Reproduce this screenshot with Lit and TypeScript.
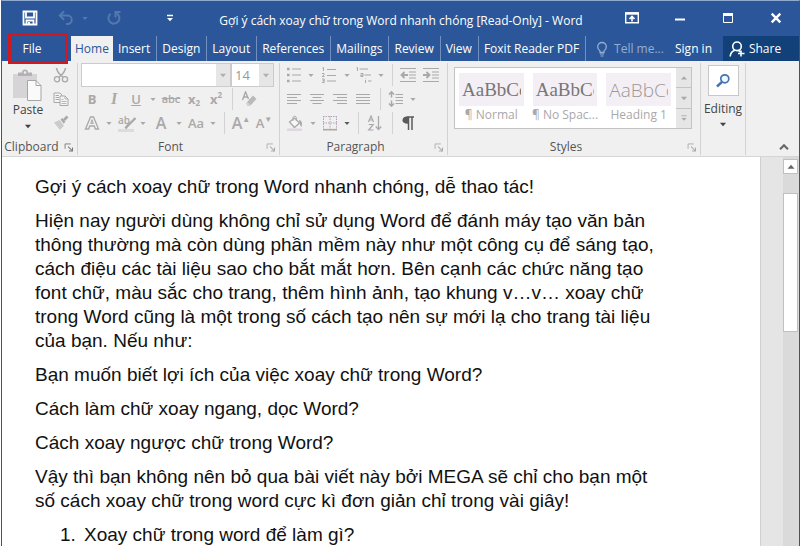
import { LitElement, html, svg, css, nothing } from "lit";
import { customElement, property } from "lit/decorators.js";

const glyphs: Record<string, any> = {
  save: svg`<path d="M1.500 1.500h13v13h-13z M4 2v5.500h8V2 M4.500 14.500v-4h7v4" fill="none" stroke="currentColor" stroke-width="1.800"/><path d="M6 12h2v3H6z" fill="currentColor"/>`,
  undo: svg`<path d="M2 5.500h7.500a4 4 0 0 1 0 8.500H8" fill="none" stroke="currentColor" stroke-width="2"/><path d="M6 1.200 1.800 5.500 6 9.800" fill="none" stroke="currentColor" stroke-width="2"/>`,
  redo: svg`<path d="M10.500 3.300A5.500 5.500 0 1 1 4.500 3.800" fill="none" stroke="currentColor" stroke-width="2"/><path d="M14.500 2H9.500v5.500" fill="none" stroke="currentColor" stroke-width="2"/>`,
  customize: svg`<path d="M5 5.500h6" stroke="currentColor" stroke-width="1.500"/><path d="M5 8h6l-3 3.200z" fill="currentColor"/>`,
  ribbon: svg`<path d="M1.700 3h12.600v9.800H1.700z" fill="none" stroke="currentColor" stroke-width="1.400"/><path d="M1 2.300h14v2.400H1z" fill="currentColor"/><path d="M8 11.500V7M5.500 9 8 6.500 10.500 9" fill="none" stroke="currentColor" stroke-width="1.600"/>`,
  min: svg`<path d="M3 9.500h10" stroke="currentColor" stroke-width="2"/>`,
  max: svg`<path d="M3.500 3.500h9v9h-9z" fill="none" stroke="currentColor"/><path d="M3 3h10v3H3z" fill="currentColor"/>`,
  close: svg`<path d="M3.700 3.700l8.600 8.600M12.300 3.700l-8.600 8.600" stroke="currentColor" stroke-width="2.400"/>`,
  bulb: svg`<path d="M6 11.500V10C4.600 9 3.700 7.700 3.700 5.800a4.300 4.300 0 0 1 8.600 0C12.300 7.700 11.400 9 10 10v1.500z" fill="none" stroke="currentColor" stroke-width="1.300"/><path d="M6 13h4M6.500 15h3" stroke="currentColor" stroke-width="1.200"/>`,
  share: svg`<circle cx="8" cy="5.300" r="4.300" fill="none" stroke="currentColor" stroke-width="1.600"/><path d="M1.200 15.500c.3-3.500 2-5.500 4.600-6.300M9.500 9.500l1.700 1.400M12 9.500v6M9 12.500h6.500" fill="none" stroke="currentColor" stroke-width="1.600"/>`,
  caret: svg`<path d="M4.500 6.500h7l-3.500 4z" fill="currentColor"/>`,
  up: svg`<path d="M4 10h8l-4-4.500z" fill="currentColor"/>`,
  more: svg`<path d="M5 5.500h6" stroke="currentColor"/><path d="M5 8h6l-3 3z" fill="currentColor"/>`,
  launch: svg`<path d="M3.500 10V4.500H10" fill="none" stroke="currentColor"/><path d="M7 7.500l4.500 4.500M12 8.500V12.500H8" fill="none" stroke="currentColor" stroke-width="1.200"/>`,
  paste: svg`<path d="M1 5h24v24H1z" fill="#d6d4d6"/><path d="M6 7V3.500h4C10 1.500 11 .5 13 .5s3 1 3 3h4V7z" fill="#b3b1b3"/><circle cx="13" cy="3.500" r="1.300" fill="#f0f0f0"/><path d="M15.500 11.500h8.500l5 5v15H15.500z" fill="#fafafa" stroke="#a6a6a6"/><path d="M24 11.500v5h5" fill="none" stroke="#a6a6a6"/>`,
  cut: svg`<path d="M3.500 1c.3 3 2 5.500 6.300 9M12.500 1c-.3 3-2 5.500-6.300 9" fill="none" stroke="currentColor" stroke-width="1.600"/><circle cx="4" cy="12.300" r="2.600" fill="none" stroke="currentColor" stroke-width="1.300"/><circle cx="12" cy="12.300" r="2.600" fill="none" stroke="currentColor" stroke-width="1.300"/>`,
  copy: svg`<path d="M1 2h6l2 2v7.500H1z" fill="#f5f5f5" stroke="currentColor"/><path d="M2.500 4.500H6M2.500 6.500H6M2.500 8.500H6" stroke="currentColor"/><path d="M7 5h5l3 3v6.500H7z" fill="#f5f5f5" stroke="currentColor"/><path d="M12 5v3h3M8.500 8.500h2M8.500 10.500h5M8.500 12.500h5" fill="none" stroke="currentColor" stroke-width=".8"/>`,
  painter: svg`<path d="M1 7.500 6.500 5l4.500 5.500-4 4.500z" fill="#cccacb"/><path d="M7.500 4.500 9.500 3 12.500 7l-2 1.500z" fill="currentColor"/><path d="M11 5l3.500-3.500" stroke="currentColor" stroke-width="2.600"/>`,
  eraser: svg`<path d="M1.500 9 4.500 1 7.500 8M2.500 6h4" fill="none" stroke="currentColor" stroke-width="1.400"/><path d="M6 11l6-6.500 3.500 3.500-6 6.500z" fill="#bbb9ba"/><path d="M5 12l1-1 3.500 3.500-1 .5H6.500z" fill="#cfcfcf"/>`,
  outlineA: svg`<path d="M1.500 14 6.500 2h3l5 12h-3.200l-1-3H5.700l-1 3z" fill="none" stroke="currentColor" stroke-width="1.300"/><path d="M6.700 8.500 8 4.700l1.300 3.800z" fill="none" stroke="currentColor"/>`,
  pen: svg`<path d="M6 10.500 14.500 2 M7 9l-2.500 3.500" stroke="currentColor" stroke-width="2.400"/>`,
  bullets: svg`<path d="M1 2h2.600M1 8h2.600M1 14h2.600" stroke="currentColor" stroke-width="2.600"/><path d="M6 2h9M6 8h9M6 14h9" stroke="currentColor" stroke-width="1.200"/>`,
  numbers: svg`<path d="M1.500 1 2.500 .5V4M1 6.500h2v1.300L1.300 9.500H3.500M1 12h2.200v3.500H1M1.500 13.700H3" fill="none" stroke="currentColor"/><path d="M6 2.500h9M6 8.500h9M6 14h9" stroke="currentColor" stroke-width="1.200"/>`,
  multilevel: svg`<path d="M.5 1 1.500.5V4M4.500 6.500h2.500V9.500H4.800V8H7M9.500 11.500v.5M9.500 13v3" fill="none" stroke="currentColor"/><path d="M3.500 2H12M8.500 8H15M12 14h3.500" stroke="currentColor" stroke-width="1.200"/>`,
  outdent: svg`<path d="M0 1.500h16M9 5h7M9 8h7M9 11h7M0 14.500h16" stroke="currentColor" stroke-width="1.100"/><path d="M8 8H1.500M4.500 5 1.500 8l3 3" fill="none" stroke="currentColor" stroke-width="1.800"/>`,
  indent: svg`<path d="M0 1.500h16M9 5h7M9 8h7M9 11h7M0 14.500h16" stroke="currentColor" stroke-width="1.100"/><path d="M0 8h6.500M3.500 5l3 3-3 3" fill="none" stroke="currentColor" stroke-width="1.800"/>`,
  left: svg`<path d="M1 3.500h14M1 6.500h10M1 9.500h14M1 12.500h10" stroke="currentColor" stroke-width="1.100"/>`,
  center: svg`<path d="M1 3.500h14M3.500 6.500h9M1 9.500h14M3.500 12.500h9" stroke="currentColor" stroke-width="1.100"/>`,
  right: svg`<path d="M1 3.500h14M5 6.500h10M1 9.500h14M5 12.500h10" stroke="currentColor" stroke-width="1.100"/>`,
  justify: svg`<path d="M1 3.500h14M1 6.500h14M1 9.500h14M1 12.500h14" stroke="currentColor" stroke-width="1.100"/>`,
  spacing: svg`<path d="M3.500 1v5.500M3.500 9.500V15M1 3.500l2.500-2.700L6 3.500M1 12.500l2.500 2.700L6 12.500" fill="none" stroke="currentColor" stroke-width="1.500"/><path d="M7.500 3.500H15M7.500 6.500H15M7.500 9.500H15M7.500 12.500H15" stroke="currentColor" stroke-width="1.100"/>`,
  bucket: svg`<path d="M2.500 7 7.500 3l5 5-5 4.500z" fill="#f7f7f7" stroke="currentColor" stroke-width="1.300"/><path d="M6 6V2.500a1.700 1.700 0 0 1 3.300 0V6" fill="none" stroke="currentColor"/><path d="M12 5c3 .5 3.500 3 2.500 7-1.500-1-1.500-3-2-4z" fill="currentColor"/><path d="M0 13.500h15V16H0z" fill="#dfd9df"/>`,
  borders: svg`<path d="M1.500 1v14M8 1v14M14.500 1v14M1 1.500h14M1 8h14" fill="none" stroke="#b5a2b5" stroke-dasharray="1.500 1"/><path d="M1 14.700h14" stroke="currentColor" stroke-width="1.600"/>`,
  sort: svg`<path d="M1.500 7 4 1l2.500 6M2.300 5h3.500M1.700 9.500h4.500L1.700 15h4.800" fill="none" stroke="currentColor" stroke-width="1.200"/><path d="M11.500 1v13M8.800 11.500l2.700 3 2.700-3" fill="none" stroke="currentColor" stroke-width="1.300"/>`,
  pilcrow: svg`<path d="M7.500 2H14M8.500 2v13M12 2v13" stroke="currentColor" stroke-width="1.500"/><path d="M8.500 1.300v7.500C4.500 9 2.500 7.500 2.500 5.200S4.500 1.300 8.500 1.300z" fill="currentColor"/>`,
  find: svg`<circle cx="9.800" cy="5.800" r="4" fill="#f4f8fc" stroke="currentColor" stroke-width="1.700"/><path d="M7 8.800 2 13.500" stroke="currentColor" stroke-width="2.500"/>`,
  collapse: svg`<path d="M3.500 10.500 8 6l4.500 4.500" fill="none" stroke="currentColor" stroke-width="2.400"/>`,
};

const icon = (name: string, size = 16, box = 16) =>
  html`<svg class="icon" width=${size} height=${size} viewBox="0 0 ${box} ${box}" aria-hidden="true">${glyphs[name]}</svg>`;

const tool = (label: string, content: unknown, size = "m", extra = "") =>
  html`<button class="tool ${size} ${extra}" aria-label=${label} title=${label}>${content}</button>`;
const drop = (label: string, extra = "") => tool(label, icon("caret", 12), "s", extra);
const bar = () => html`<span class="bar"></span>`;

const controls = css`
  * { box-sizing: border-box; }
  button, select, input { font: inherit; color: inherit; background: none; border: 0; border-radius: 0; padding: 0; margin: 0; }
  button { display: flex; align-items: center; justify-content: center; white-space: nowrap; }
  .icon { display: block; flex: none; }
`;

@customElement("ribbon-group")
class RibbonGroup extends LitElement {
  @property() label = "";
  @property({ type: Boolean }) launcher = false;
  static styles = [controls, css`
    :host { display: flex; flex-direction: column; height: 92px; border-right: 1px solid #d2d2d2; }
    .content { flex: 1; min-height: 0; }
    .foot { display: flex; align-items: center; height: 16px; color: #555; }
    .name { flex: 1; text-align: center; }
    .launch { width: 16px; height: 16px; color: var(--launch, #aaa); }
  `];
  render() {
    return html`<div class="content"><slot></slot></div>
      <div class="foot"><span class="name">${this.label}</span>
      ${this.launcher ? html`<button class="launch" aria-label="${this.label} settings">${icon("launch", 14)}</button>` : nothing}</div>`;
  }
}

@customElement("app-root")
class AppRoot extends LitElement {
  static styles = [controls, css`
    :host { display: block; background: #fff; padding: 0 0 2px 1px; font: 12px/16px "Open Sans", "Noto Sans", sans-serif; }
    .window { display: flex; flex-direction: column; min-height: calc(100vh - 2px); border: 1px solid #2b579a; border-top-color: #8fa9cf; border-bottom: 0; }
    .titlebar { display: flex; align-items: center; height: 35px; background: #2b579a; color: #fff; padding: 0 15px 0 20px; }
    .quick { display: flex; align-items: center; margin-top: -2px; }
    .quick button { height: 24px; }
    .faded { color: #5478b0; }
    .save { width: 16px; }
    .undo { width: 16px; margin-left: 20px; }
    .undo-more { width: 14px; margin-left: 4px; }
    .redo { width: 16px; margin-left: 14px; }
    .customize { width: 16px; margin-left: 40px; }
    .title { flex: 1; margin: 4px 0 0; font: 12px/16px "Open Sans", "Noto Sans", sans-serif; text-align: center; white-space: nowrap; }
    .system { display: flex; gap: 32px; margin-top: -2px; }
    .tabs { display: flex; align-items: center; height: 25px; background: #2b579a; color: #fff; }
    .tabs button { height: 25px; }
    .tabs .file { width: 60px; height: 31px; margin: 0 3px 0 6px; padding-right: 12px; border: 3px solid #d01820; position: relative; }
    .tabs .tab { padding: 0 6px 0 5px; border-right: 1px solid #7290bf; }
    .tabs .active { background: #f0f0f0; color: #2b579a; border: 0; padding: 0 4px; }
    .tell { display: flex; align-items: center; gap: 4px; flex: 1; padding-left: 8px; color: #95add2; min-width: 0; }
    .tell input { width: 52px; min-width: 0; flex: 1; outline: 0; }
    .tell input::placeholder { color: #95add2; opacity: 1; }
    .signin { margin: 0 11px 0 8px; }
    .tabs .share { width: 76px; gap: 4px; background: #124079; padding-right: 12px; }
    .ribbon { display: flex; height: 96px; padding-top: 2px; background: #f0f0f0; color: #aaa8a9; border-bottom: 1px solid #d5d5d5; }
    .clipboard { width: 76px; --launch: #777; }
    .font { width: 202px; }
    .paragraph { width: 168px; }
    .styles { flex: 1; min-width: 0; }
    .editing { width: 45px; }
    .clip { display: flex; justify-content: space-between; padding: 0 8px 0 10px; }
    .paste { flex-direction: column; color: #444; padding-top: 6px; gap: 1px; justify-content: flex-start; }
    .clip-tools { display: flex; flex-direction: column; gap: 8px; padding-top: 4px; }
    .rows { display: flex; flex-direction: column; padding-left: 3px; }
    .row { display: flex; align-items: center; height: 24px; }
    .tool { height: 22px; font-weight: 600; font-size: 13px; }
    .s { width: 12px; } .m { width: 22px; } .l { width: 24px; }
    .bold { font-weight: 700; }
    .italic { font-family: "Liberation Serif", serif; font-style: italic; font-size: 16px; }
    .under { text-decoration: underline; }
    .strike { text-decoration: line-through; font-size: 11px; }
    .big { font-size: 16px; }
    .index { font-weight: 700; }
    .tiny { font-size: 8px; line-height: 8px; }
    .subscript { padding-top: 8px; }
    .superscript { padding-bottom: 8px; }
    .highlight { position: relative; font-size: 10px; }
    .highlight svg { position: absolute; left: 6px; top: 4px; }
    .highlight span { border-bottom: 3px solid #dedbde; padding: 0 4px 3px 0; line-height: 12px; }
    .dark { color: #5b5b5b; }
    .bar { width: 10px; height: 22px; background: linear-gradient(#d2d2d2, #d2d2d2) center / 1px 100% no-repeat; }
    .combo { display: flex; align-items: center; height: 24px; background: #fff; border: 1px solid #cbcbcb; color: #999; position: relative; }
    .combo select { appearance: none; width: 100%; height: 22px; padding: 0 16px 0 3px; font-size: 13px; outline: 0; }
    .combo span { position: absolute; right: 0; top: 0; display: flex; align-items: center; width: 14px; height: 22px; background: #e6e6e6; pointer-events: none; color: #b0b0b0; }
    .face { width: 150px; } .size { width: 43px; }
    .gallery { display: flex; height: 62px; margin: 4px 8px 0 6px; border: 1px solid #c3c3c3; background: #fff; overflow: hidden; }
    .cards { display: flex; flex: 1; gap: 9px; padding: 5px 5px 0 4px; min-width: 0; }
    .card { flex: 1 1 0; min-width: 0; flex-direction: column; justify-content: flex-start; gap: 1px; }
    .sample { display: block; width: 100%; height: 33px; line-height: 34px; background: #f4eff5; padding-left: 3px; border-right: 3px solid #f4eff5; overflow: hidden; text-align: left; font-family: "Liberation Serif", serif; font-size: 19px; color: #777; }
    .heading { font-family: "Open Sans", sans-serif; font-weight: 300; color: #999; }
    .scrolls { width: 15px; display: grid; grid-template-rows: repeat(3, 1fr); gap: 1px; background: #c3c3c3; }
    .scrolls button { background: #e6e6e6; width: 15px; }
    .edit { width: 44px; flex-direction: column; color: #444; padding-top: 2px; }
    .find { display: flex; align-items: center; justify-content: center; width: 31px; height: 31px; background: #fff; border: 1px solid #c8c8c8; color: #4474b0; margin-bottom: 5px; }
    .end { width: 53px; display: flex; align-items: flex-end; justify-content: flex-end; padding: 0 8px 2px 0; color: #666; }
    .workspace { display: flex; flex: 1; background: #e5e5e5; }
    .page { flex: 1; background: #fff; border-right: 1px solid #cfcfcf; padding: 18px 100px 0 33px; color: #111; font: 19px/24px "Liberation Sans", Arial, sans-serif; }
    .page p { margin: 0 0 10px; }
    .page ol { margin: 0; padding-left: 46px; }
    .page li { padding-left: 3px; height: 20px; }
    .gutter { width: 22px; }
    .scrollbar { width: 16px; background: #dadada; padding: 2px 1px 0 0; }
    .scrollbar button { width: 15px; background: #fff; border: 1px solid #c0c0c0; color: #666; }
    .arrow { height: 15px; margin-bottom: 19px; }
    .thumb { height: 139px; }
  `];

  tabs = ["Insert", "Design", "Layout", "References", "Mailings", "Review", "View", "Foxit Reader PDF"];

  render() {
    return html`<div class="window">
      <header class="titlebar">
        <div class="quick">
          <button class="save" aria-label="Save">${icon("save")}</button>
          <button class="undo faded" aria-label="Undo">${icon("undo")}</button>
          <button class="undo-more faded" aria-label="Undo history">${icon("caret", 12)}</button>
          <button class="redo faded" aria-label="Repeat">${icon("redo")}</button>
          <button class="customize" aria-label="Customize toolbar">${icon("customize")}</button>
        </div>
        <h1 class="title">Gợi ý cách xoay chữ trong Word nhanh chóng [Read-Only] - Word</h1>
        <div class="system">
          <button aria-label="Ribbon display options">${icon("ribbon")}</button>
          <button aria-label="Minimize">${icon("min")}</button>
          <button aria-label="Maximize">${icon("max")}</button>
          <button aria-label="Close">${icon("close")}</button>
        </div>
      </header>
      <nav class="tabs">
        <button class="file">File</button>
        <button class="tab active">Home</button>
        ${this.tabs.map((t) => html`<button class="tab">${t}</button>`)}
        <label class="tell">${icon("bulb")}<input aria-label="Tell me" placeholder="Tell me..." /></label>
        <button class="signin">Sign in</button>
        <button class="share">${icon("share")}Share</button>
      </nav>
      <div class="ribbon">
        <ribbon-group class="clipboard" label="Clipboard" launcher>
          <div class="clip">
            <button class="paste">${icon("paste", 32, 32)}<span>Paste</span>${icon("caret", 14)}</button>
            <div class="clip-tools">
              <button aria-label="Cut">${icon("cut")}</button>
              <button aria-label="Copy">${icon("copy")}</button>
              <button aria-label="Format Painter">${icon("painter")}</button>
            </div>
          </div>
        </ribbon-group>
        <ribbon-group class="font" label="Font" launcher>
          <div class="rows">
            <div class="row">
              <label class="combo face"><select aria-label="Font name"><option></option></select><span>${icon("caret", 14)}</span></label>
              <label class="combo size"><select aria-label="Font size"><option>14</option></select><span>${icon("caret", 14)}</span></label>
            </div>
            <div class="row">
              ${tool("Bold", "B", "m", "bold")}${tool("Italic", "I", "m", "italic")}${tool("Underline", "U", "m", "under")}${drop("Underline style")}
              ${tool("Strikethrough", "abc", "l", "strike")}
              ${tool("Subscript", html`x<span class="tiny subscript">2</span>`, "m", "index")}
              ${tool("Superscript", html`x<span class="tiny superscript">2</span>`, "m", "index")}
              ${bar()}${tool("Clear formatting", icon("eraser"), "l")}
            </div>
            <div class="row">
              ${tool("Text effects", icon("outlineA"))}${drop("Text effect options")}
              ${tool("Highlight", html`<span>ab</span>${icon("pen")}`, "m", "highlight")}${drop("Highlight color")}
              ${tool("Font color", "A", "l", "big")}${drop("Font color options")}
              ${tool("Change case", "Aa")}${drop("Case options")}${bar()}
              ${tool("Grow font", html`A<span class="tiny superscript">▲</span>`, "l", "big")}
              ${tool("Shrink font", html`A<span class="tiny superscript">▼</span>`)}
            </div>
          </div>
        </ribbon-group>
        <ribbon-group class="paragraph" label="Paragraph" launcher>
          <div class="rows">
            <div class="row">
              ${tool("Bullets", icon("bullets"))}${drop("Bullet library")}${tool("Numbering", icon("numbers"), "l")}${drop("Numbering library")}
              ${tool("Multilevel list", icon("multilevel"))}${drop("List library")}${bar()}
              ${tool("Decrease indent", icon("outdent"))}${tool("Increase indent", icon("indent"), "l")}
            </div>
            <div class="row">
              ${tool("Align left", icon("left"))}${tool("Center", icon("center"), "l")}${tool("Align right", icon("right"))}${tool("Justify", icon("justify"), "l")}
              ${bar()}${tool("Line spacing", icon("spacing"))}${drop("Spacing options")}
            </div>
            <div class="row">
              ${tool("Shading", icon("bucket"), "l")}${drop("Shading color")}${tool("Borders", icon("borders"))}${drop("Border options", "dark")}
              ${bar()}${tool("Sort", icon("sort"), "l")}${bar()}${tool("Show marks", icon("pilcrow"), "m", "dark")}
            </div>
          </div>
        </ribbon-group>
        <ribbon-group class="styles" label="Styles" launcher>
          <div class="gallery">
            <div class="cards">
              <button class="card"><span class="sample">AaBbCc</span><span>¶ Normal</span></button>
              <button class="card"><span class="sample">AaBbCc</span><span>¶ No Spac...</span></button>
              <button class="card"><span class="sample heading">AaBbCc</span><span>Heading 1</span></button>
            </div>
            <div class="scrolls">
              <button aria-label="Previous styles">${icon("up", 12)}</button>
              <button aria-label="Next styles">${icon("caret", 14)}</button>
              <button aria-label="More styles">${icon("more", 14)}</button>
            </div>
          </div>
        </ribbon-group>
        <ribbon-group class="editing">
          <button class="edit"><span class="find">${icon("find")}</span><span>Editing</span>${icon("caret", 14)}</button>
        </ribbon-group>
        <div class="end"><button aria-label="Collapse ribbon">${icon("collapse", 14)}</button></div>
      </div>
      <main class="workspace">
        <article class="page">
          <p>Gợi ý cách xoay chữ trong Word nhanh chóng, dễ thao tác!</p>
          <p>Hiện nay người dùng không chỉ sử dụng Word để đánh máy tạo văn bản<br />thông thường mà còn dùng phần mềm này như một công cụ để sáng tạo,<br />cách điệu các tài liệu sao cho bắt mắt hơn. Bên cạnh các chức năng tạo<br />font chữ, màu sắc cho trang, thêm hình ảnh, tạo khung v…v… xoay chữ<br />trong Word cũng là một trong số cách tạo nên sự mới lạ cho trang tài liệu<br />của bạn. Nếu như:</p>
          <p>Bạn muốn biết lợi ích của việc xoay chữ trong Word?</p>
          <p>Cách làm chữ xoay ngang, dọc Word?</p>
          <p>Cách xoay ngược chữ trong Word?</p>
          <p>Vậy thì bạn không nên bỏ qua bài viết này bởi MEGA sẽ chỉ cho bạn một<br />số cách xoay chữ trong word cực kì đơn giản chỉ trong vài giây!</p>
          <ol><li>Xoay chữ trong word để làm gì?</li></ol>
        </article>
        <div class="gutter"></div>
        <div class="scrollbar">
          <button class="arrow" aria-label="Scroll up">${icon("up", 14)}</button>
          <button class="thumb" aria-label="Scroll position"></button>
        </div>
      </main>
    </div>`;
  }
}
